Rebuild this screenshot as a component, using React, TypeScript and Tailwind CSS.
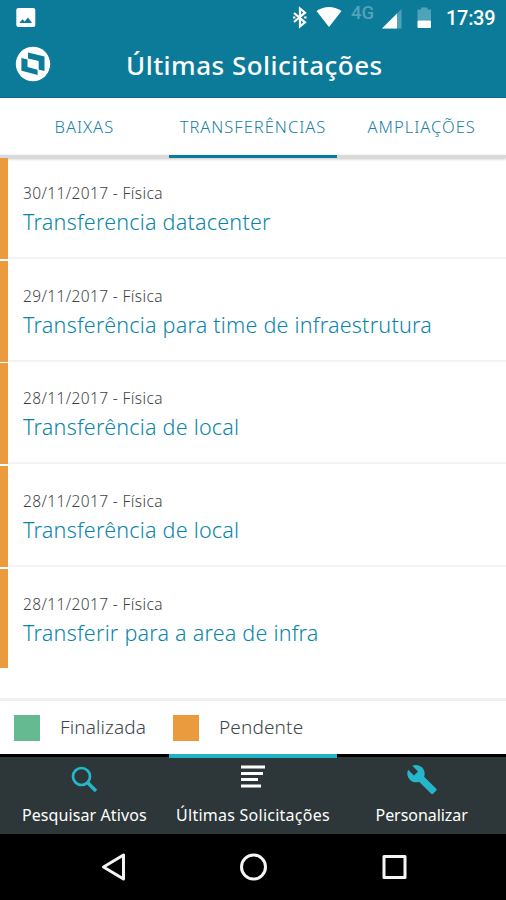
import React from "react";

const rows = [
  { date: "30/11/2017 - Física", title: "Transferencia datacenter" },
  { date: "29/11/2017 - Física", title: "Transferência para time de infraestrutura" },
  { date: "28/11/2017 - Física", title: "Transferência de local" },
  { date: "28/11/2017 - Física", title: "Transferência de local" },
  { date: "28/11/2017 - Física", title: "Transferir para a area de infra" },
];

function StatusBar() {
  return (
    <div className="flex h-9 items-start">
      <svg className="mt-2 ml-4 h-[19px] w-5" viewBox="0 0 20 19">
        <rect x="0.3" y="0" width="19" height="19" rx="2" fill="#fff" />
        <path d="M3.3 15 L6.5 11.2 L8.7 13.5 L12 9.5 L16 15Z" fill="#0c7a99" />
      </svg>
      <svg className="ml-[249px] h-9 w-[160px]" viewBox="285 0 160 36">
        <path d="M294 13 L305 22.3 L300 26.5 V8.5 L305 12.7 L294 22" fill="none" stroke="#fff" strokeWidth="2.200" />
        <path d="M293 17.500h2.400M304.200 17.500h2.400" stroke="#fff" strokeWidth="2" />
        <path d="M316.5 11 Q329 3 341.5 11 L329 27Z" fill="#fff" />
        <text x="351" y="19" fontSize="18.500" fill="#55a3b8" fontFamily="Roboto, sans-serif" fontWeight="500">4G</text>
        <path d="M382 28.5 L401.5 9 V28.5Z" fill="#4ea3b9" />
        <path d="M382 28.5 L397 13.5 V28.5Z" fill="#fff" />
        <path d="M421 7.5h6.500v2h3.500v11h-13.500v-11h3.500z" fill="#4ea3b9" />
        <rect x="417.500" y="20.500" width="13.500" height="7.500" rx="1" fill="#fff" />
      </svg>
      <span className="mt-1.5 ml-px font-[Roboto,sans-serif] text-[20px] leading-6 font-medium tracking-[-0.3px] whitespace-nowrap">17:39</span>
    </div>
  );
}

export default function App() {
  return (
    <div className="flex h-[900px] w-[506px] flex-col overflow-hidden bg-white font-['Noto_Sans','Open_Sans',sans-serif]">
      <header className="h-[98px] shrink-0 border-b border-[#0a6a8a] bg-[#0c7a99] text-white">
        <StatusBar />
        <div className="flex h-[58px] items-center">
          <svg className="mb-0.5 ml-[15px] h-9 w-9" viewBox="0 0 36 36">
            <circle cx="18" cy="18" r="17.200" fill="#fff" />
            <path d="M13 6.500 L29.500 10.500 V25 L13 21Z" fill="#0c7a99" />
            <path d="M6 11.500 L23 15.500 V29.500 L6 25Z" fill="#0c7a99" stroke="#fff" strokeWidth="0.800" />
            <path d="M12.500 12.500 L23.500 15 V24 L12.500 21Z" fill="#fff" />
          </svg>
          <h1 className="ml-[75px] text-[26px] leading-8 font-medium tracking-[0.480px] whitespace-nowrap">Últimas Solicitações</h1>
        </div>
      </header>
      <nav className="grid h-[57px] shrink-0 grid-cols-3 text-center text-[16.500px] leading-[58px] font-light tracking-[1px] text-[#2080a8]">
        <span className="whitespace-nowrap">BAIXAS</span>
        <span className="whitespace-nowrap">TRANSFERÊNCIAS</span>
        <span className="whitespace-nowrap">AMPLIAÇÕES</span>
      </nav>
      <div className="grid h-[3px] shrink-0 grid-cols-3 bg-[#dadada] shadow-[0_1px_3px_#00000040]">
        <i /><i className="bg-[#087b9f]" />
      </div>
      <main className="h-[540px] shrink-0">
        {rows.map((row, i) => (
          <div key={i} className="flex h-[102.650px]">
            <div className="flex w-2 flex-col">
              <span className={i < 4 ? "h-[101px] bg-[#e99b3e]" : "h-[99px] bg-[#e99b3e]"} />
            </div>
            <div className={i < 4 ? "h-[101px] flex-1 border-b-2 border-[#f3f3f3] pt-6 pl-[15px]" : "flex-1 pt-6 pl-[15px]"}>
              <p className="text-[15.500px] leading-[22px] font-light tracking-[0.380px] whitespace-nowrap text-[#3c4447]">{row.date}</p>
              <h2 className="mt-[3px] text-[21.500px] leading-[30px] font-light tracking-[0.230px] whitespace-nowrap text-[#0a86ab]">{row.title}</h2>
            </div>
          </div>
        ))}
      </main>
      <section className="flex h-[56px] shrink-0 items-center border-t-[3px] border-[#f0f0f0] text-[19px] font-light text-[#3c474a]">
        <i className="ml-3.5 h-[26px] w-[26px] bg-[#65ba92]" />
        <span className="ml-5 w-[113px] tracking-[0.100px] whitespace-nowrap">Finalizada</span>
        <i className="h-[26px] w-[26px] bg-[#e99b3e]" />
        <span className="ml-5 tracking-[0.150px] whitespace-nowrap">Pendente</span>
      </section>
      <nav className="grid h-[80px] shrink-0 grid-cols-3 bg-[#2d3739] text-center text-[16px] tracking-[0.100px] text-white">
        <div className="border-t-[3px] border-black">
          <svg className="mx-auto mt-2 h-[30px] w-[30px]" viewBox="0 0 30 30" fill="none" stroke="#25b6c9">
            <circle cx="12.500" cy="11.500" r="8.500" strokeWidth="2.700" />
            <path d="M18.500 17.500 L27 26" strokeWidth="3.500" />
          </svg>
          <p className="mt-2 leading-6 whitespace-nowrap">Pesquisar Ativos</p>
        </div>
        <div className="border-t-4 border-[#21b4c6]">
          <svg className="mx-auto mt-[5px] h-[30px] w-[24px]" viewBox="0 0 24 30" stroke="#fff" strokeWidth="3.200">
            <path d="M0 4h24M0 10.500h22M0 16.500h17M0 23h20" />
          </svg>
          <p className="mt-2.5 leading-6 tracking-[0.250px] whitespace-nowrap">Últimas Solicitações</p>
        </div>
        <div className="border-t-[3px] border-black">
          <svg className="mx-auto mt-[6px] h-[33px] w-[32px]" viewBox="0 0 24 24" fill="#25b6c9">
            <path d="M22.700 19l-9.100-9.100c.9-2.300.4-5-1.500-6.900-2-2-5-2.400-7.400-1.300L9 6 6 9 1.600 4.700C.4 7.100.9 10.100 2.900 12.100c1.900 1.900 4.600 2.400 6.900 1.500l9.100 9.100c.4.4 1 .4 1.400 0l2.300-2.300c.5-.4.5-1.100.1-1.400z" />
          </svg>
          <p className="mt-[7px] leading-6 tracking-[-0.050px] whitespace-nowrap">Personalizar</p>
        </div>
      </nav>
      <footer className="flex flex-1 justify-center bg-black">
        <svg className="h-[66px] w-[308px] shrink-0" viewBox="99 834 308 66" fill="none" stroke="#f5f5f5" strokeWidth="3" strokeLinejoin="round">
          <path d="M103.500 867 L123.500 855 V879Z" />
          <circle cx="253.500" cy="867" r="12" />
          <rect x="384" y="856.500" width="21" height="21" />
        </svg>
      </footer>
    </div>
  );
}
